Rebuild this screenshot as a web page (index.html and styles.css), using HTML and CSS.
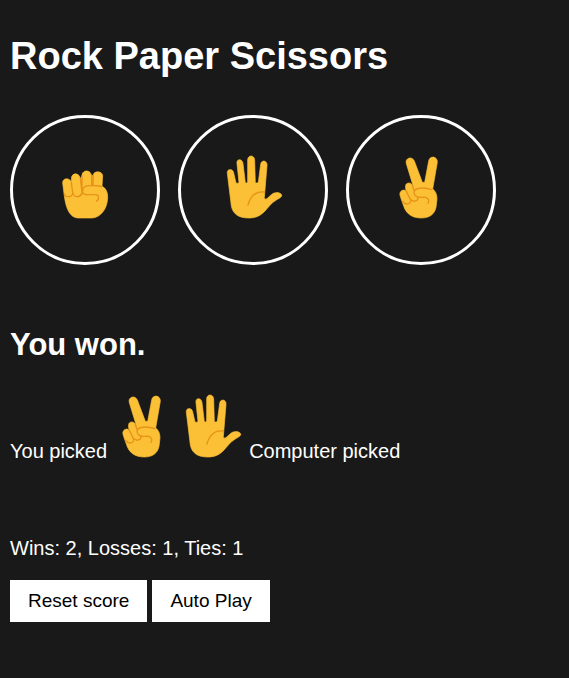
FILE: index.html
```html
<!DOCTYPE html>
<html lang="en">
<head>
  <meta charset="utf-8">
  <meta name="viewport" content="width=device-width, initial-scale=1">
  <title>Rock Paper Scissors</title>
  <link rel="stylesheet" href="styles.css">
</head>
<body>
  <svg class="sprites" aria-hidden="true">
    <symbol id="rock" viewBox="3 -18 204 216">
      <path class="skin" d="M38 69C37 53 60 52 64 67L64 57C64 36 89 37 91 57L96 47C96 28 124 28 124 48L130 45C131 32 157 32 158 47L156 79C167 84 173 95 173 111C173 147 151 173 126 174L84 174C60 173 48 147 43 108Z"/>
      <path class="crease" d="M64 67L68 98C69 108 59 112 50 109Q45 107 43 102M91 55L96 96C97 108 85 112 76 109Q70 107 68 98M96 47V88M125 46V75M130 45L129 75M155 80Q141 75 116 77C105 78 99 83 98 91C97 100 103 105 113 104L137 104C147 104 149 116 140 124M96 98Q92 109 84 109"/>
    </symbol>
    <symbol id="paper" viewBox="9 18 204 216">
      <path class="skin" d="M34 76C32 61 51 62 53 74L60 105Q64 107 69 104L63 47C60 31 80 31 81 47L88 104Q91 106 95 103V36C95 20 115 20 116 36L118 104Q124 107 127 103L134 49C136 34 155 37 153 53L145 149Q148 157 154 151L166 140C175 132 190 132 196 139C201 146 189 151 181 156C165 165 157 179 145 191C132 204 119 210 98 210C66 210 50 196 46 174Z"/>
      <path class="crease" d="M96 171C103 145 119 129 145 132"/>
    </symbol>
    <symbol id="scissors" viewBox="-9 18 204 216">
      <path class="skin" d="M49 47C44 30 66 23 73 39L97 103L104 103L116 39C119 21 143 25 142 43L128 123C139 131 143 146 140 162L138 178C134 199 118 210 94 210C66 210 47 197 40 171Q35 159 30 142C27 128 43 121 49 131Q45 121 47 112C49 103 63 102 67 112L71 119Z"/>
      <path class="crease" d="M49 130L61 154C65 161 59 168 51 168Q43 168 38 160M67 113L72 127M61 154Q72 164 81 157Q86 151 82 147M125 125C106 118 93 119 80 123C69 127 70 140 79 145C86 150 97 147 107 148Q121 154 114 166"/>
    </symbol>
  </svg>
  <main>
    <h1>Rock Paper Scissors</h1>
    <div class="moves">
      <button class="move" type="button" aria-label="Rock"><svg class="hand"><use href="#rock"/></svg></button>
      <button class="move" type="button" aria-label="Paper"><svg class="hand"><use href="#paper"/></svg></button>
      <button class="move" type="button" aria-label="Scissors"><svg class="hand"><use href="#scissors"/></svg></button>
    </div>
    <h2>You won.</h2>
    <p class="picks">
      <span>You picked</span>
      <svg class="hand" role="img" aria-label="Scissors"><use href="#scissors"/></svg>
      <svg class="hand" role="img" aria-label="Paper"><use href="#paper"/></svg>
      <span>Computer picked</span>
    </p>
    <p class="score">Wins: 2, Losses: 1, Ties: 1</p>
    <div class="actions">
      <button class="action" type="button">Reset score</button>
      <button class="action" type="button">Auto Play</button>
    </div>
  </main>
</body>
</html>
```
FILE: styles.css
```css
* {
  box-sizing: border-box;
}

body {
  margin: 0;
  padding: 32px 10px;
  background: #191919;
  color: #fff;
  font-family: Arial, "Liberation Sans", sans-serif;
  font-size: 20px;
  line-height: 24px;
}

h1 {
  margin: 0 0 35px;
  font-size: 38px;
  line-height: 48px;
}

h2 {
  margin: 60px 0 28px;
  font-size: 31px;
  line-height: 40px;
}

.sprites {
  display: none;
}

.skin {
  fill: #fbc036;
  stroke: #fbc036;
  stroke-width: 2;
  stroke-linejoin: round;
}

.crease {
  fill: none;
  stroke: #e79318;
  stroke-width: 4;
  stroke-linecap: round;
  stroke-linejoin: round;
}

.hand {
  display: block;
  flex: none;
  width: 68px;
  height: 72px;
}

.moves {
  display: flex;
  flex-wrap: wrap;
  gap: 18px;
}

.move {
  display: flex;
  align-items: center;
  justify-content: center;
  width: 150px;
  height: 150px;
  padding: 0;
  border: 3px solid #fff;
  border-radius: 50%;
  background: transparent;
  cursor: pointer;
}

.picks {
  display: flex;
  align-items: flex-end;
  margin: 0;
}

.picks span {
  padding: 0 3px 2px 0;
}

.picks span:last-child {
  padding: 0 0 2px 3px;
}

.score {
  margin: 71px 0 20px;
}

.actions {
  display: flex;
  flex-wrap: wrap;
  gap: 5px;
}

.action {
  padding: 9px 18px;
  border: 0;
  background: #fff;
  color: #000;
  font: inherit;
  font-size: 19px;
  cursor: pointer;
}
```
